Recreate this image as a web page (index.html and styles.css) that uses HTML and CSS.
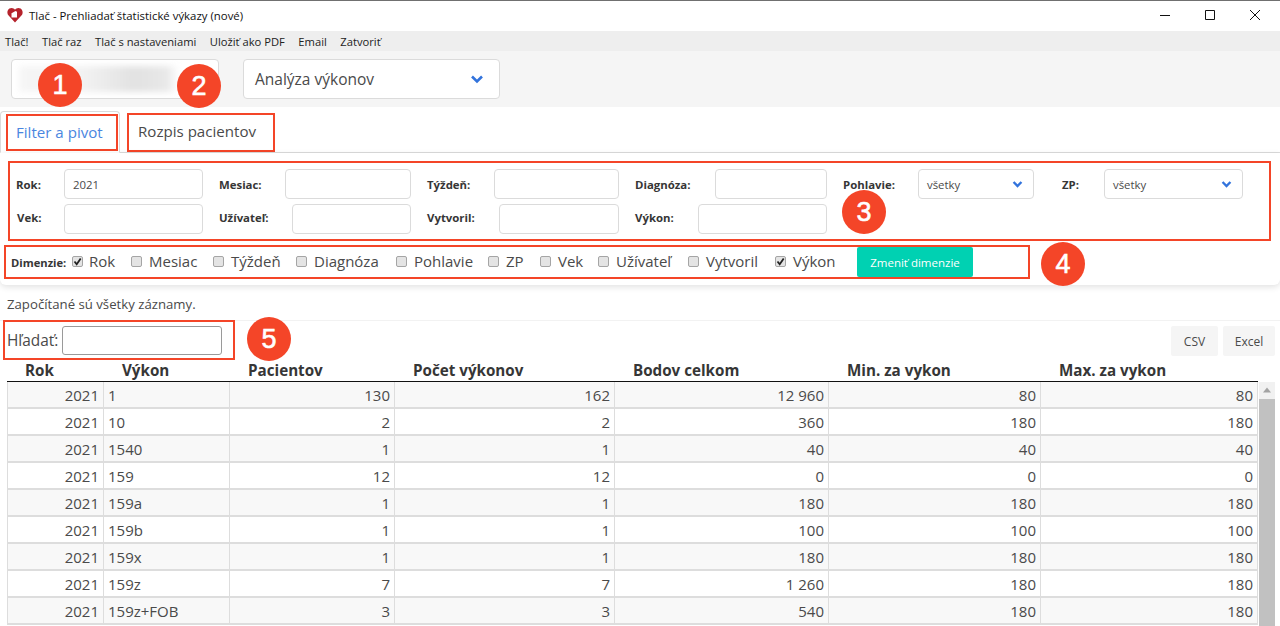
FILE: index.html
```html
<!DOCTYPE html>
<html lang="sk">
<head>
<meta charset="utf-8">
<title>Tlač - Prehliadať štatistické výkazy (nové)</title>
<link rel="stylesheet" href="styles.css">
</head>
<body>
<div class="app">
  <header class="titlebar">
    <svg class="logo" viewBox="0 0 16 16" width="16" height="16"><path fill="#b5232c" d="M8 15.500 1.600 8.600C-.4 6.400.2 2.800 2.400 1.500 4.600.3 6.900 1 8 2.800 9.100 1 11.400.3 13.600 1.500c2.200 1.300 2.800 4.900.8 7.100z"/><path fill="#fff" d="M4.500 6.200 8.500 4l1.500.8v5.700H4.500z"/></svg>
    <span class="title">Tlač - Prehliadať štatistické výkazy (nové)</span>
    <div class="winctl">
      <svg viewBox="0 0 12 12" width="12" height="12"><path d="M1 6.500h10" stroke="#111" fill="none"/></svg>
      <svg viewBox="0 0 12 12" width="12" height="12"><path d="M1.500 1.500h9v9h-9z" stroke="#111" fill="none"/></svg>
      <svg viewBox="0 0 12 12" width="12" height="12"><path d="M1 1l10 10M11 1 1 11" stroke="#111" fill="none"/></svg>
    </div>
  </header>
  <nav class="menubar">
    <span>Tlač!</span><span>Tlač raz</span><span>Tlač s nastaveniami</span><span>Uložiť ako PDF</span><span>Email</span><span>Zatvoriť</span>
  </nav>
  <section class="topselects">
    <div class="selectbox first"><div class="blurred"></div></div>
    <div class="selectbox second"><span>Analýza výkonov</span>
      <svg class="chev" viewBox="0 0 14 10" width="14" height="10"><path d="M2 2.500 7 7.500l5-5" stroke="#3273dc" stroke-width="2.600" fill="none"/></svg>
    </div>
  </section>
  <section class="tabs">
    <div class="tab active"><span class="tabmark markone">Filter a pivot</span></div>
    <div class="tab"><span class="tabmark marktwo">Rozpis pacientov</span></div>
  </section>
  <section class="panel">
    <div class="filters">
      <div class="frow">
        <label class="field f1"><b>Rok:</b><input class="inp w139" value="2021"></label>
        <label class="field f2"><b>Mesiac:</b><input class="inp w126"></label>
        <label class="field f3"><b>Týždeň:</b><input class="inp w125"></label>
        <label class="field f4"><b>Diagnóza:</b><input class="inp w112"></label>
        <label class="field f5"><b>Pohlavie:</b><div class="sel w116"><span>všetky</span><svg viewBox="0 0 14 10" width="11" height="8"><path d="M2 2.500 7 7.500l5-5" stroke="#3273dc" stroke-width="3" fill="none"/></svg></div></label>
        <label class="field f6"><b>ZP:</b><div class="sel w139"><span>všetky</span><svg viewBox="0 0 14 10" width="11" height="8"><path d="M2 2.500 7 7.500l5-5" stroke="#3273dc" stroke-width="3" fill="none"/></svg></div></label>
      </div>
      <div class="frow">
        <label class="field f1"><b class="vek">Vek:</b><input class="inp w139"></label>
        <label class="field f2"><b>Užívateľ:</b><input class="inp w119"></label>
        <label class="field f3"><b>Vytvoril:</b><input class="inp w120"></label>
        <label class="field f4"><b>Výkon:</b><input class="inp w129"></label>
      </div>
    </div>
    <div class="dims">
      <b class="dimlabel">Dimenzie:</b>
      <span class="dim d-rok"><i class="cb"><svg viewBox="0 0 11 11" width="11" height="11"><path d="M2.500 5.500 4.700 8.200 8.700 2.500" stroke="#222" stroke-width="1.800" fill="none"/></svg></i>Rok</span>
      <span class="dim d-mes"><i class="cb"></i>Mesiac</span>
      <span class="dim d-tyz"><i class="cb"></i>Týždeň</span>
      <span class="dim d-dia"><i class="cb"></i>Diagnóza</span>
      <span class="dim d-poh"><i class="cb"></i>Pohlavie</span>
      <span class="dim d-zp"><i class="cb"></i>ZP</span>
      <span class="dim d-vek"><i class="cb"></i>Vek</span>
      <span class="dim d-uzi"><i class="cb"></i>Užívateľ</span>
      <span class="dim d-vyt"><i class="cb"></i>Vytvoril</span>
      <span class="dim d-vyk"><i class="cb"><svg viewBox="0 0 11 11" width="11" height="11"><path d="M2.500 5.500 4.700 8.200 8.700 2.500" stroke="#222" stroke-width="1.800" fill="none"/></svg></i>Výkon</span>
      <button class="apply">Zmeniť dimenzie</button>
    </div>
  </section>
  <p class="note">Započítané sú všetky záznamy.</p>
  <section class="toolbar">
    <div class="search"><span>Hľadať:</span><input class="searchinp"></div>
    <div class="exports"><button class="exp csv">CSV</button><button class="exp xls">Excel</button></div>
  </section>
  <section class="tablewrap">
    <table class="data">
      <colgroup><col class="c1"><col class="c2"><col class="c3"><col class="c4"><col class="c5"><col class="c6"><col class="c7"></colgroup>
      <thead><tr><th>Rok</th><th>Výkon</th><th>Pacientov</th><th>Počet výkonov</th><th>Bodov celkom</th><th>Min. za vykon</th><th>Max. za vykon</th></tr></thead>
      <tbody>
        <tr><td>2021</td><td>1</td><td>130</td><td>162</td><td>12 960</td><td>80</td><td>80</td></tr>
        <tr><td>2021</td><td>10</td><td>2</td><td>2</td><td>360</td><td>180</td><td>180</td></tr>
        <tr><td>2021</td><td>1540</td><td>1</td><td>1</td><td>40</td><td>40</td><td>40</td></tr>
        <tr><td>2021</td><td>159</td><td>12</td><td>12</td><td>0</td><td>0</td><td>0</td></tr>
        <tr><td>2021</td><td>159a</td><td>1</td><td>1</td><td>180</td><td>180</td><td>180</td></tr>
        <tr><td>2021</td><td>159b</td><td>1</td><td>1</td><td>100</td><td>100</td><td>100</td></tr>
        <tr><td>2021</td><td>159x</td><td>1</td><td>1</td><td>180</td><td>180</td><td>180</td></tr>
        <tr><td>2021</td><td>159z</td><td>7</td><td>7</td><td>1 260</td><td>180</td><td>180</td></tr>
        <tr><td>2021</td><td>159z+FOB</td><td>3</td><td>3</td><td>540</td><td>180</td><td>180</td></tr>
      </tbody>
    </table>
    <div class="scrollbar"><svg viewBox="0 0 16 16" width="16" height="16"><path d="M8 5 4 10h8z" fill="#a3a3a3"/></svg><div class="thumb"></div></div>
  </section>
  <span class="badge b1">1</span>
  <span class="badge b2">2</span>
  <span class="badge b3">3</span>
  <span class="badge b4">4</span>
  <span class="badge b5">5</span>
</div>
</body>
</html>
```
FILE: styles.css
```css
* { box-sizing: border-box; }
html, body { margin: 0; padding: 0; height: 626px; overflow: hidden; background: #fff; }
body { font-family: "Open Sans", "Noto Sans", sans-serif; color: #363636; font-size: 14px; }
.app { position: relative; width: 1280px; height: 626px; overflow: hidden; }

.titlebar { height: 31px; border-top: 1px solid #707070; display: flex; align-items: center; padding: 0 0 2px 7px; background: #fff; }
.logo { flex: none; }
.title { font-size: 11.400px; color: #111; margin-left: 6px; white-space: nowrap; }
.winctl { margin-left: auto; display: flex; gap: 33px; padding-right: 19px; }

.menubar { height: 20px; background: #eeeeee; display: flex; gap: 13.500px; align-items: center; padding-left: 5px; font-size: 11.200px; color: #222; white-space: nowrap; }

.topselects { height: 56px; background: #f5f5f5; display: flex; padding: 8px 0 0 11px; gap: 24px; }
.selectbox { height: 40px; background: #fff; border: 1px solid #dbdbdb; border-radius: 4px; display: flex; align-items: center; }
.selectbox.first { width: 208px; padding-left: 7px; overflow: hidden; }
.selectbox.second { width: 257px; padding: 0 15px 0 11px; justify-content: space-between; font-size: 15.500px; color: #4a4a4a; }
.blurred { width: 160px; height: 26px; background: linear-gradient(90deg, #f6f6f6 0%, #f2f2f2 40%, #e2e2e2 72%, #e8e8e8 92%, #fff 100%); filter: blur(3px); }

.tabs { height: 46px; display: flex; align-items: flex-end; border-bottom: 1px solid #dbdbdb; background: #fff; }
.tab { height: 42px; display: flex; align-items: flex-end; font-size: 15.100px; color: #4a4a4a; white-space: nowrap; }
.tab.active { width: 120px; border: 1px solid #dbdbdb; border-bottom-color: #fff; border-radius: 4px 4px 0 0; color: #4a86e0; margin-bottom: -1px; padding: 2px 0 1px 5px; align-items: stretch; }
.tabmark { border: 2px solid #f44528; display: flex; align-items: center; padding-bottom: 2px; }
.markone { width: 112px; padding-left: 8px; }
.marktwo { margin-left: 7px; width: 148px; height: 39px; padding-left: 9px; padding-bottom: 3px; }

.panel { height: 132px; padding: 8px 9px 0 4px; background: #fff; box-shadow: 0 2px 6px rgba(0,0,0,.12); border-radius: 0 0 6px 6px; position: relative; }
.filters { margin-left: 4px; width: 1263px; height: 80px; border: 2px solid #f44528; padding: 6px 0 0 6px; display: flex; flex-direction: column; gap: 5px; }
.frow { display: flex; height: 30px; }
.frow + .frow b { margin-bottom: 3px; }
.field { display: flex; align-items: center; justify-content: space-between; font-size: 11.400px; color: #363636; }
.field b { font-weight: 700; }
.f1 { width: 187px; margin-right: 16px; }
.f2 { width: 192px; margin-right: 16px; }
.f3 { width: 192px; margin-right: 16px; }
.f4 { width: 192px; margin-right: 16px; }
.f5 { width: 191px; margin-right: 28px; }
.f6 { width: 181px; }
.vek { margin-left: 1px; }
.inp { height: 30px; border: 1px solid #dbdbdb; border-radius: 4px; background: #fff; padding: 2px 8px; font: 11.400px "Open Sans", sans-serif; color: #4a4a4a; outline: none; }
.w139 { width: 139px; } .w126 { width: 126px; } .w125 { width: 125px; } .w112 { width: 112px; }
.w116 { width: 116px; } .w119 { width: 119px; } .w120 { width: 120px; } .w129 { width: 129px; }
.sel { height: 30px; border: 1px solid #dbdbdb; border-radius: 4px; display: flex; align-items: center; justify-content: space-between; padding: 0 10px 0 8px; font-weight: 400; color: #4a4a4a; }

.dims { margin-top: 4px; width: 1026px; height: 34px; border: 2px solid #f44528; display: flex; align-items: center; padding-left: 5px; font-size: 15px; color: #4a4a4a; white-space: nowrap; position: relative; }
.dimlabel { font-size: 11.200px; color: #363636; width: 61px; flex: none; }
.dim { display: flex; align-items: center; flex: none; line-height: 20px; padding-bottom: 2px; }
.cb { width: 11px; height: 11px; margin: 0 7px 0 0; flex: none; display: block; background: #e4e4e4; border: 1px solid #a5a5a5; border-radius: 2px; position: relative; }
.d-rok .cb { margin-right: 6px; }
.cb svg { position: absolute; left: -1px; top: -1px; }
.d-rok { width: 59px; } .d-mes { width: 82px; } .d-tyz { width: 83px; } .d-dia { width: 100px; }
.d-poh { width: 92px; } .d-zp { width: 52px; } .d-vek { width: 58px; } .d-uzi { width: 90px; }
.d-vyt { width: 87px; } .d-vyk { width: 82px; }
.apply { width: 116px; height: 30px; background: #00d1b2; color: #fff; border: 0; border-radius: 2px; font: 11.500px "Open Sans", sans-serif; padding: 0; flex: none; }

.note { margin: 0; height: 36px; padding: 10px 0 0 7px; font-size: 13.200px; line-height: 18px; color: #4a4a4a; border-bottom: 1px solid #f2f2f2; }
.toolbar { height: 40px; margin-top: -1px; display: flex; justify-content: space-between; padding: 0 5px 0 3px; }
.search { width: 232px; height: 40px; border: 2px solid #f44528; display: flex; align-items: center; padding: 0 0 0 2px; font-size: 15.400px; color: #4a4a4a; position: relative; }
.searchinp { width: 160px; height: 29px; margin-left: auto; margin-right: 11px; border: 1px solid #9a9a9a; border-radius: 3px; background: #fff; outline: none; }
.exports { display: flex; gap: 5px; padding-top: 6px; }
.exp { height: 30px; background: #f5f5f5; border: 0; border-radius: 2px; font: 12px "Open Sans", sans-serif; color: #4a4a4a; padding: 0; }
.csv { width: 47px; } .xls { width: 52px; }

.tablewrap { display: flex; align-items: flex-start; padding-left: 7px; }
.data { width: 1251px; table-layout: fixed; border-collapse: separate; border-spacing: 0; flex: none; font-size: 15px; color: #4a4a4a; }
.c1 { width: 97px; } .c2 { width: 126px; } .c3 { width: 165px; } .c4 { width: 220px; } .c5 { width: 214px; } .c6 { width: 212px; } .c7 { width: 217px; }
.data th { height: 22px; padding: 0 0 2px 18px; text-align: left; font-weight: 700; font-size: 15.200px; color: #363636; border-bottom: 1px solid #111; line-height: 18px; white-space: nowrap; }
.data td { height: 27px; padding: 0 4px 0 4px; text-align: right; border-right: 1px solid #ddd; border-bottom: 2px solid #ddd; white-space: nowrap; line-height: 20px; }
.data td:nth-child(2) { text-align: left; }
.data td:first-child { border-left: 1px solid #ddd; }
.data tbody tr:nth-child(odd) { background: #f8f8f8; }
.scrollbar { margin: 22px 0 0 1px; width: 16px; height: 260px; background: #f1f1f1; flex: none; }
.scrollbar svg { display: block; height: 17px; }
.thumb { height: 243px; background: #c1c1c1; }

.badge { position: absolute; width: 44px; height: 44px; border-radius: 50%; background: #f44528; color: #fff; font: 400 27px/44px "Liberation Sans", sans-serif; -webkit-text-stroke: .6px #fff; text-align: center; }
.b1 { left: 38px; top: 63px; }
.b2 { left: 177px; top: 64px; }
.b3 { left: 842px; top: 190px; }
.b4 { left: 1041px; top: 242px; }
.b5 { left: 247px; top: 317px; }
```
